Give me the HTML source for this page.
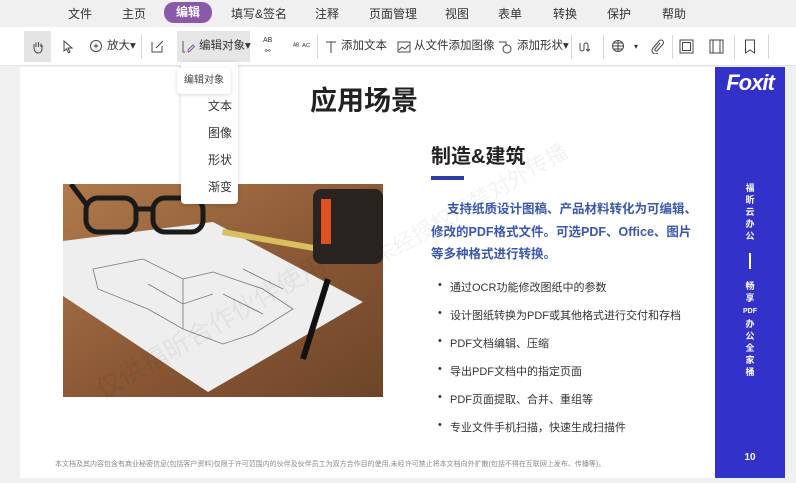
<!DOCTYPE html>
<html><head><meta charset="utf-8"><style>
*{margin:0;padding:0;box-sizing:border-box}
body{width:796px;height:483px;overflow:hidden;background:#f0f0f0;font-family:"Liberation Sans","Noto Sans CJK SC",sans-serif;position:relative;color:#333}
.menu{position:absolute;top:0;left:0;width:796px;height:27px;background:#f0f0f0;font-size:12px}
.menu span{position:absolute;top:5px}
.menu .act{background:#8a5aa8;color:#fff;border-radius:10px;padding:0 12px;height:21px;line-height:21px;top:2px;font-weight:bold}
.tb{position:absolute;top:27px;left:0;width:796px;height:39px;background:#fff;border-bottom:1px solid #e2e2e2;font-size:11.5px}
.tb .i{position:absolute;top:0;height:39px;line-height:39px;display:flex;align-items:center;gap:3px}
.sep{position:absolute;top:8px;width:1px;height:24px;background:#d8d8d8}
.page{position:absolute;left:20px;top:67px;width:695px;height:411px;background:#fff;overflow:hidden}
.blue{position:absolute;left:715px;top:67px;width:70px;height:411px;background:#3232c8;color:#fff;text-align:center}
.drop{position:absolute;left:181px;top:62px;width:57px;height:142px;background:#fff;border-radius:4px;box-shadow:0 1px 5px rgba(0,0,0,.18);font-size:12px}
.drop div{position:absolute;left:27px}
.tip{position:absolute;left:177px;top:68px;width:54px;height:26px;background:#fff;border-radius:4px;box-shadow:0 1px 4px rgba(0,0,0,.15);font-size:10px;line-height:26px;text-align:center;color:#444}
.li{position:absolute;left:418px;font-size:11px;color:#333}
.li:before{content:"•";position:absolute;left:0;top:0}
.li span{margin-left:12px}
</style></head><body>
<div class="menu">
<span style="left:68px">文件</span><span style="left:122px">主页</span><span class="act" style="left:164px">编辑</span>
<span style="left:231px">填写&amp;签名</span><span style="left:315px">注释</span><span style="left:369px">页面管理</span>
<span style="left:445px">视图</span><span style="left:498px">表单</span><span style="left:553px">转换</span><span style="left:607px">保护</span><span style="left:662px">帮助</span>
</div>
<div class="tb">
<div style="position:absolute;left:24px;top:4px;width:27px;height:31px;background:#e4e4e4"></div>
<div class="i" style="left:31px"><svg width="14" height="14" viewBox="0 0 14 14" fill="none" stroke="#444" stroke-width="1"><path d="M3 8V4M5 7V2.5M7.5 7V2M10 7V3.5M3 8c0 3 2 5 4.5 5S11 11 11 8V5"/></svg></div>
<div class="i" style="left:62px"><svg width="12" height="14" viewBox="0 0 12 14" fill="none" stroke="#444"><path d="M2 1l8 7H6l2 4-1.5.8-2-4L2 11z"/></svg></div>
<div class="i" style="left:89px"><svg width="15" height="15" viewBox="0 0 15 15" fill="none" stroke="#444"><circle cx="7" cy="7" r="5.5"/><path d="M7 4.5v5M4.5 7h5"/></svg>放大▾</div>
<div class="sep" style="left:141px"></div>
<div class="i" style="left:150px"><svg width="15" height="15" viewBox="0 0 15 15" fill="none" stroke="#444"><path d="M2 3v10h10V7M6 9l7-7"/></svg></div>
<div style="position:absolute;left:177px;top:4px;width:73px;height:31px;background:#e6e6e6"></div>
<div class="i" style="left:181px"><svg width="15" height="15" viewBox="0 0 15 15" fill="none" stroke="#555"><path d="M2 2v11h2M7 13h1"/><path d="M7 11l5-5 1.5 1.5-5 5H7z" stroke="#8a5aa8"/></svg>编辑对象▾</div>
<div class="i" style="left:263px;font-size:7px;line-height:8px;flex-direction:column;justify-content:center">AB<br><span>⚯</span></div>
<div class="i" style="left:293px;font-size:7px">ᴬᴮ<sub>AC</sub></div>
<div class="sep" style="left:317px"></div>
<div class="i" style="left:324px"><svg width="14" height="14" viewBox="0 0 14 14" fill="none" stroke="#444"><path d="M2 2h10M7 2v11"/></svg>添加文本</div>
<div class="i" style="left:397px"><svg width="14" height="14" viewBox="0 0 14 14" fill="none" stroke="#444"><rect x="1" y="2" width="12" height="10"/><path d="M2 10l3-3 3 2 4-4"/></svg>从文件添加图像</div>
<div class="i" style="left:498px"><svg width="16" height="14" viewBox="0 0 16 14" fill="none" stroke="#444"><path d="M1 2h7v3"/><circle cx="9" cy="9" r="4"/></svg>添加形状▾</div>
<div class="sep" style="left:571px"></div>
<div class="i" style="left:578px"><svg width="16" height="14" viewBox="0 0 16 14" fill="none" stroke="#444"><path d="M2 3v6a2 2 0 0 0 4 0V5a2 2 0 0 1 4 0v6m-2-2l2 2 2-2"/></svg></div>
<div class="sep" style="left:603px"></div>
<div class="i" style="left:611px"><svg width="16" height="15" viewBox="0 0 16 15" fill="none" stroke="#444"><circle cx="7" cy="7" r="5.5"/><path d="M1.5 7h11M7 1.5v11M3 4h8M3 10h8"/></svg><span style="font-size:8px;margin-left:4px">▾</span></div>
<div class="i" style="left:650px"><svg width="14" height="15" viewBox="0 0 14 15" fill="none" stroke="#444"><path d="M10 4l-5 6a1.5 1.5 0 0 0 2 2l6-7a2.5 2.5 0 0 0-4-3L3 9a3.5 3.5 0 0 0 5 5"/></svg></div>
<div class="sep" style="left:672px"></div>
<div class="i" style="left:679px"><svg width="15" height="15" viewBox="0 0 15 15" fill="none" stroke="#444"><rect x="1" y="1" width="13" height="13"/><rect x="3.5" y="3.5" width="8" height="8"/></svg></div>
<div class="i" style="left:709px"><svg width="15" height="15" viewBox="0 0 15 15" fill="none" stroke="#444"><rect x="1" y="1" width="13" height="13"/><path d="M4 1v13M11 1v13"/></svg></div>
<div class="sep" style="left:734px"></div>
<div class="i" style="left:744px"><svg width="12" height="15" viewBox="0 0 12 15" fill="none" stroke="#444"><path d="M1.5 1h9v13l-4.5-3-4.5 3z"/></svg></div>
<div class="sep" style="left:768px"></div>
</div>

<div class="page">
<div style="position:absolute;left:290px;top:12px;font-size:27px;font-weight:bold;color:#222">应用场景</div>
<svg style="position:absolute;left:43px;top:117px" width="320" height="213" viewBox="0 0 320 213">
<defs><linearGradient id="w" x1="0" y1="0" x2="1" y2="1"><stop offset="0" stop-color="#b07a4c"/><stop offset=".5" stop-color="#8c5a36"/><stop offset="1" stop-color="#6e4428"/></linearGradient></defs>
<rect width="320" height="213" fill="url(#w)"/>
<polygon points="0,57 150,38 300,118 145,208 0,112" fill="#eeeeee"/>
<g fill="none" stroke="#777" stroke-width=".8"><path d="M30,85 L80,75 L120,95 L150,88 L200,105 L230,125 L190,150 L160,160 L120,145 L85,125 L35,105z"/><path d="M85,100 L120,120 L150,110 M120,95 L120,145 M160,110 L200,130 M180,85 L220,105"/></g>
<rect x="160" y="45" width="100" height="6" fill="#d8c060" transform="rotate(10 160 45)"/>
<rect x="250" y="5" width="70" height="75" rx="8" fill="#2a2420"/><rect x="258" y="15" width="10" height="45" fill="#e05020"/>
<g fill="none" stroke="#1a1a1a" stroke-width="5"><rect x="23" y="14" width="50" height="34" rx="12"/><rect x="90" y="14" width="50" height="34" rx="12"/><path d="M73 25h17M23 20L8 0"/></g>
<path d="M265 95 L240 175" stroke="#111" stroke-width="6"/>
</svg>
<div style="position:absolute;left:411px;top:73px;font-size:20px;font-weight:bold;color:#222">制造&amp;建筑</div>
<div style="position:absolute;left:411px;top:109px;width:33px;height:4px;background:#2e3ea0"></div>
<div style="position:absolute;left:411px;top:131px;width:266px;font-size:12.5px;font-weight:bold;color:#3b58a8;line-height:22.5px">　 支持纸质设计图稿、产品材料转化为可编辑、修改的PDF格式文件。可选PDF、Office、图片等多种格式进行转换。</div>
<div class="li" style="top:212px"><span>通过OCR功能修改图纸中的参数</span></div>
<div class="li" style="top:240px"><span>设计图纸转换为PDF或其他格式进行交付和存档</span></div>
<div class="li" style="top:268px"><span>PDF文档编辑、压缩</span></div>
<div class="li" style="top:296px"><span>导出PDF文档中的指定页面</span></div>
<div class="li" style="top:324px"><span>PDF页面提取、合并、重组等</span></div>
<div class="li" style="top:352px"><span>专业文件手机扫描，快速生成扫描件</span></div>
<div style="position:absolute;left:35px;top:392px;font-size:7px;color:#888;white-space:nowrap">本文档及其内容包含有商业秘密信息(包括客户资料)仅限于许可范围内的伙伴及伙伴员工为双方合作目的使用,未经许可禁止将本文档向外扩散(包括不得在互联网上发布、传播等)。</div>
<div style="position:absolute;left:60px;top:240px;font-size:26px;color:rgba(0,0,0,.05);transform:rotate(-30deg);white-space:nowrap">仅供福昕合作伙伴使用</div>
<div style="position:absolute;left:340px;top:120px;font-size:22px;color:rgba(0,0,0,.05);transform:rotate(-30deg);white-space:nowrap">未经授权严禁对外传播</div>
</div>
<div class="blue">
<div style="margin-top:3px;font-size:22px;font-weight:bold;font-style:italic;letter-spacing:-1px">Foxit</div>
<div style="position:absolute;left:0;width:70px;top:115px;font-size:9px;font-weight:bold;line-height:12px">福<br>昕<br>云<br>办<br>公</div>
<div style="position:absolute;left:34px;top:186px;width:1.5px;height:16px;background:#fff"></div>
<div style="position:absolute;left:0;width:70px;top:213px;font-size:9px;font-weight:bold;line-height:12px">畅<br>享<br><span style="font-size:7px">PDF</span><br>办<br>公<br>全<br>家<br>桶</div>
<div style="position:absolute;left:0;width:70px;top:385px;font-size:10px;font-weight:bold">10</div>
</div>
<div class="drop"><div style="top:35px">文本</div><div style="top:62px">图像</div><div style="top:89px">形状</div><div style="top:116px">渐变</div></div>
<div class="tip">编辑对象</div>
</body></html>
